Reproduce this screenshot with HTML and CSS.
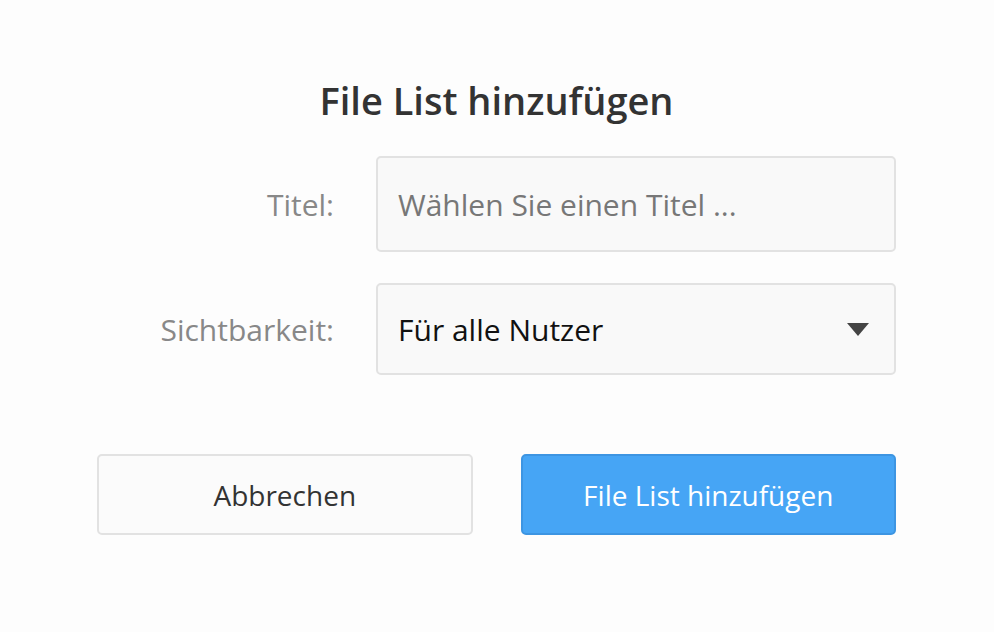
FILE: index.html
```html
<!DOCTYPE html>
<html lang="de">
<head>
<meta charset="utf-8">
<link rel="stylesheet" href="styles.css">
</head>
<body>
<div class="dialog">
  <h1 class="title">File List hinzufügen</h1>
  <div class="form">
    <div class="row">
      <label class="label">Titel:</label>
      <div class="field field-input"><span class="placeholder">Wählen Sie einen Titel ...</span></div>
    </div>
    <div class="row">
      <label class="label">Sichtbarkeit:</label>
      <div class="field field-select"><span class="value">Für alle Nutzer</span><span class="caret"></span></div>
    </div>
  </div>
  <div class="actions">
    <button class="btn btn-cancel">Abbrechen</button>
    <button class="btn btn-primary">File List hinzufügen</button>
  </div>
</div>
</body>
</html>
```

FILE: styles.css
```css
html, body {
  margin: 0;
  padding: 0;
  background: #fdfdfd;
  font-family: "Open Sans", "Noto Sans", sans-serif;
}
.dialog {
  width: 799px;
  margin-left: 97px;
  padding-top: 76px;
}
.title {
  margin: 0;
  text-align: center;
  font-size: 38px;
  font-weight: 600;
  color: #333;
  line-height: 48px;
}
.form {
  margin-top: 32px;
  display: flex;
  flex-direction: column;
  gap: 31px;
}
.row {
  display: flex;
  align-items: center;
  gap: 42px;
}
.label {
  width: 237px;
  text-align: right;
  font-size: 30px;
  color: #888;
}
.field {
  width: 520px;
  box-sizing: border-box;
  border: 2px solid #e2e2e2;
  border-radius: 5px;
  background: #f9f9f9;
  display: flex;
  align-items: center;
  padding: 0 20px;
  font-size: 30px;
}
.field-input { height: 96px; }
.field-select { height: 92px; justify-content: space-between; }
.placeholder { color: #777; }
.value { color: #111; }
.caret {
  width: 0;
  height: 0;
  border-left: 11px solid transparent;
  border-right: 11px solid transparent;
  border-top: 13px solid #444;
  margin-right: 5px;
}
.actions {
  margin-top: 79px;
  display: flex;
  gap: 48px;
}
.btn {
  flex: 1;
  height: 81px;
  border-radius: 5px;
  font-family: inherit;
  font-size: 28px;
  box-sizing: border-box;
  cursor: pointer;
}
.btn-cancel {
  background: #fbfbfb;
  border: 2px solid #e2e2e2;
  color: #333;
}
.btn-primary {
  background: #46a5f5;
  border: 2px solid #3d95e2;
  color: #fff;
}
```
